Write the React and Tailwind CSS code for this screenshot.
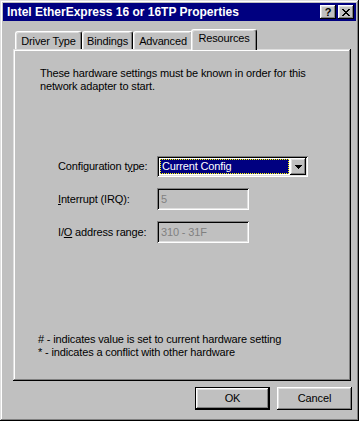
import React from "react";

// Win95 bevels
const raisedWin =
  "shadow-[inset_-1px_-1px_#000,inset_1px_1px_#dfdfdf,inset_-2px_-2px_#808080,inset_2px_2px_#fff]";
const raisedBtn =
  "shadow-[inset_-1px_-1px_#000,inset_1px_1px_#fff,inset_-2px_-2px_#808080,inset_2px_2px_#dfdfdf]";
const sunken =
  "shadow-[inset_1px_1px_#808080,inset_-1px_-1px_#fff,inset_2px_2px_#000,inset_-2px_-2px_#dfdfdf]";

const Tab = ({ label, width, active }) => (
  <div
    style={{ width }}
    className={
      active
        ? "relative z-10 -mx-[2px] -mb-px h-[21px] pt-[2px] text-center bg-[#c0c0c0] border-l border-t border-white border-r border-r-black rounded-t-[3px] shadow-[inset_-1px_0_#808080,inset_1px_1px_#dfdfdf]"
        : "h-[18px] pt-[3px] text-center bg-[#c0c0c0] border-l border-t border-white border-r border-r-black rounded-t-[3px] shadow-[inset_-1px_0_#808080,inset_1px_1px_#dfdfdf]"
    }
  >
    <span className="whitespace-nowrap">{label}</span>
  </div>
);

const TitleButton = ({ children }) => (
  <div className={`w-[16px] h-[14px] bg-[#c0c0c0] flex items-center justify-center ${raisedBtn}`}>
    {children}
  </div>
);

const Field = ({ label, children }) => (
  <div className="flex items-center">
    <div className="w-[99px] whitespace-nowrap">{label}</div>
    {children}
  </div>
);

export default function App() {
  return (
    <div className="w-[364px] h-[425px] bg-white font-['Liberation_Sans',Arial,sans-serif] text-[11px] leading-[13px] tracking-[-0.15px] text-black">
      <div className={`w-[359px] h-[421px] bg-[#c0c0c0] p-[3px] flex flex-col ${raisedWin}`}>
        {/* TITLE BAR */}
        <div className="h-[18px] bg-[#000080] flex items-center justify-between pl-[4px] pr-[2px]">
          <span className="text-white font-bold text-[12px] tracking-normal whitespace-nowrap">
            Intel EtherExpress 16 or 16TP Properties
          </span>
          <div className="flex gap-[2px]">
            <TitleButton>
              <span className="font-bold text-[11px] leading-none">?</span>
            </TitleButton>
            <TitleButton>
              <svg width="8" height="7" viewBox="0 0 8 7" shapeRendering="crispEdges">
                <path d="M0 0h2v1h-2zM6 0h2v1h-2zM1 1h2v1h-2zM5 1h2v1h-2zM2 2h4v1h-4zM3 3h2v1h-2zM2 4h4v1h-4zM1 5h2v1h-2zM5 5h2v1h-2zM0 6h2v1h-2zM6 6h2v1h-2z" fill="#000" />
              </svg>
            </TitleButton>
          </div>
        </div>

        {/* TABS */}
        <div className="mt-[8px] pl-[12px] flex items-end h-[20px]">
          <Tab label="Driver Type" width={67} />
          <Tab label="Bindings" width={51} />
          <Tab label="Advanced" width={60} />
          <Tab label="Resources" width={66} active />
        </div>

        {/* PANEL */}
        <div className={`ml-[10px] w-[338px] h-[332px] bg-[#c0c0c0] flex flex-col ${raisedWin}`}>
          <p className="mt-[18px] pl-[27px] whitespace-nowrap">
            These hardware settings must be known in order for this
            <br />
            network adapter to start.
          </p>

          <div className="mt-[63px] pl-[45px] flex flex-col">
            <Field
              label={
                <>
                  Configuration t<span className="underline">y</span>pe:
                </>
              }
            >
              <div className={`w-[151px] h-[21px] bg-white p-[2px] flex ${sunken}`}>
                <div className="flex-1 p-px">
                  <div className="h-full bg-[#000080] outline outline-1 outline-dotted outline-[#ffff00] -outline-offset-1 text-white pl-[2px] flex items-center">
                    Current Config
                  </div>
                </div>
                <div className={`w-[16px] h-[17px] bg-[#c0c0c0] flex items-center justify-center ${raisedBtn}`}>
                  <svg width="7" height="4" viewBox="0 0 7 4" shapeRendering="crispEdges">
                    <path d="M0 0h7v1h-7zM1 1h5v1h-5zM2 2h3v1h-3zM3 3h1v1h-1z" fill="#000" />
                  </svg>
                </div>
              </div>
            </Field>

            <div className="mt-[11px]">
              <Field
                label={
                  <>
                    <span className="underline">I</span>nterrupt (IRQ):
                  </>
                }
              >
                <div className={`w-[92px] h-[22px] bg-[#c0c0c0] pl-[4px] flex items-center text-[#808080] ${sunken}`}>
                  5
                </div>
              </Field>
            </div>

            <div className="mt-[11px]">
              <Field
                label={
                  <>
                    I/<span className="underline">O</span> address range:
                  </>
                }
              >
                <div className={`w-[92px] h-[22px] bg-[#c0c0c0] pl-[4px] flex items-center text-[#808080] ${sunken}`}>
                  310 - 31F
                </div>
              </Field>
            </div>
          </div>

          <p className="mt-[90px] pl-[25px] whitespace-nowrap">
            # - indicates value is set to current hardware setting
            <br />* - indicates a conflict with other hardware
          </p>
        </div>

        {/* BUTTONS */}
        <div className="mt-[6px] ml-[192px] flex gap-[7px]">
          <div className="w-[75px] h-[23px] border border-black">
            <div className={`w-full h-full bg-[#c0c0c0] flex items-center justify-center ${raisedBtn}`}>
              OK
            </div>
          </div>
          <div className={`w-[75px] h-[23px] bg-[#c0c0c0] flex items-center justify-center ${raisedBtn}`}>
            Cancel
          </div>
        </div>
      </div>
    </div>
  );
}
